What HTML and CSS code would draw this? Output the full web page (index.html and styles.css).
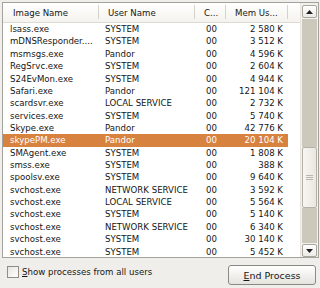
FILE: index.html
```html
<!DOCTYPE html>
<html>
<head>
<meta charset="utf-8">
<link rel="stylesheet" href="styles.css">
</head>
<body>
<div class="win">
  <div class="listbox">
    <div class="table">
      <div class="hdr">
        <div class="h">Image Name</div>
        <div class="h">User Name</div>
        <div class="h">C...</div>
        <div class="h">Mem Us...</div>
        <div class="h last"></div>
      </div>
      <div class="rows">
        <div class="row"><span class="c1">lsass.exe</span><span class="c2">SYSTEM</span><span class="c3">00</span><span class="c4">2 580 K</span></div>
        <div class="row"><span class="c1">mDNSResponder....</span><span class="c2">SYSTEM</span><span class="c3">00</span><span class="c4">3 512 K</span></div>
        <div class="row"><span class="c1">msmsgs.exe</span><span class="c2">Pandor</span><span class="c3">00</span><span class="c4">4 596 K</span></div>
        <div class="row"><span class="c1">RegSrvc.exe</span><span class="c2">SYSTEM</span><span class="c3">00</span><span class="c4">2 604 K</span></div>
        <div class="row"><span class="c1">S24EvMon.exe</span><span class="c2">SYSTEM</span><span class="c3">00</span><span class="c4">4 944 K</span></div>
        <div class="row"><span class="c1">Safari.exe</span><span class="c2">Pandor</span><span class="c3">00</span><span class="c4">121 104 K</span></div>
        <div class="row"><span class="c1">scardsvr.exe</span><span class="c2">LOCAL SERVICE</span><span class="c3">00</span><span class="c4">2 732 K</span></div>
        <div class="row"><span class="c1">services.exe</span><span class="c2">SYSTEM</span><span class="c3">00</span><span class="c4">5 740 K</span></div>
        <div class="row"><span class="c1">Skype.exe</span><span class="c2">Pandor</span><span class="c3">00</span><span class="c4">42 776 K</span></div>
        <div class="row sel"><span class="c1">skypePM.exe</span><span class="c2">Pandor</span><span class="c3">00</span><span class="c4">20 104 K</span></div>
        <div class="row"><span class="c1">SMAgent.exe</span><span class="c2">SYSTEM</span><span class="c3">00</span><span class="c4">1 808 K</span></div>
        <div class="row"><span class="c1">smss.exe</span><span class="c2">SYSTEM</span><span class="c3">00</span><span class="c4">388 K</span></div>
        <div class="row"><span class="c1">spoolsv.exe</span><span class="c2">SYSTEM</span><span class="c3">00</span><span class="c4">9 640 K</span></div>
        <div class="row"><span class="c1">svchost.exe</span><span class="c2">NETWORK SERVICE</span><span class="c3">00</span><span class="c4">3 592 K</span></div>
        <div class="row"><span class="c1">svchost.exe</span><span class="c2">LOCAL SERVICE</span><span class="c3">00</span><span class="c4">5 564 K</span></div>
        <div class="row"><span class="c1">svchost.exe</span><span class="c2">SYSTEM</span><span class="c3">00</span><span class="c4">5 140 K</span></div>
        <div class="row"><span class="c1">svchost.exe</span><span class="c2">NETWORK SERVICE</span><span class="c3">00</span><span class="c4">6 340 K</span></div>
        <div class="row"><span class="c1">svchost.exe</span><span class="c2">SYSTEM</span><span class="c3">00</span><span class="c4">30 140 K</span></div>
        <div class="row"><span class="c1">svchost.exe</span><span class="c2">SYSTEM</span><span class="c3">00</span><span class="c4">5 452 K</span></div>
      </div>
    </div>
    <div class="sb">
      <div class="sbbtn"><svg width="7" height="4" viewBox="0 0 7 4"><path d="M0 4 L3.5 0 L7 4 Z" fill="#222"/></svg></div>
      <div class="track t1"></div>
      <div class="thumb"><div class="grip"></div></div>
      <div class="track t2"></div>
      <div class="sbbtn"><svg width="7" height="4" viewBox="0 0 7 4"><path d="M0 0 L7 0 L3.5 4 Z" fill="#222"/></svg></div>
    </div>
  </div>
  <div class="bottom">
    <label class="chk"><span class="box"></span><span><u>S</u>how processes from all users</span></label>
    <div class="btn"><u>E</u>nd Process</div>
  </div>
</div>
</body>
</html>
```

FILE: styles.css
```css
html, body {
  margin: 0;
  padding: 0;
}
body {
  width: 320px;
  height: 288px;
  overflow: hidden;
  background: #efeeea;
  font-family: "DejaVu Sans", sans-serif;
  font-size: 8.6px;
  color: #161616;
}
.win {
  padding: 2px 1px 0 2px;
}
.listbox {
  display: flex;
  height: 254px;
  border: 1px solid #a3a29d;
  background: #ffffff;
}
.table {
  width: 298px;
  overflow: hidden;
}
.hdr {
  display: grid;
  grid-template-columns: 96px 96px 31px 62px 13px;
  height: 19px;
  border-bottom: 1px solid #dcdad2;
  background: linear-gradient(#ffffff, #f4f3ee);
}
.h {
  display: flex;
  align-items: center;
  padding-left: 9px;
  padding-top: 1px;
  border-right: 1px solid #d6d3cb;
  margin: 2px 0 3px;
}
.h:first-child { padding-left: 10px; }
.h.last { border-right: none; }
.rows {
  padding-top: 0.1px;
}
.row {
  display: grid;
  grid-template-columns: 96px 96px 31px 62px;
  width: 285px;
  height: 12.37px;
  line-height: 12.37px;
  white-space: nowrap;
}
.row.sel {
  background: #d7823f;
  color: #ffffff;
}
.c1 { padding-left: 7px; }
.c2 { padding-left: 6px; }
.c3 { text-align: right; padding-right: 9px; }
.c4 { text-align: right; padding-right: 5px; }
.sb {
  width: 17px;
  display: flex;
  flex-direction: column;
  align-items: stretch;
  border-left: 1px solid #e6e4de;
  background: #f2f1ec;
}
.sbbtn {
  height: 11px;
  margin: 2px 1px 1px 1px;
  border: 1px solid #a9a69c;
  border-radius: 2px;
  background: linear-gradient(#ffffff, #ecebe6);
  display: flex;
  align-items: center;
  justify-content: center;
}
.sbbtn:last-child {
  margin: 1px 1px 0 1px;
}
.track {
  background: #cdc8bc;
  margin: 0 1px;
}
.t1 { height: 128px; }
.t2 { flex: 1; }
.thumb {
  height: 59px;
  margin: 0 1px;
  border: 1px solid #b5b1a6;
  border-radius: 2px;
  background: linear-gradient(90deg, #f7f6f2, #e9e7e0);
  display: flex;
  align-items: center;
  justify-content: center;
}
.grip {
  width: 7px;
  height: 5px;
  background: repeating-linear-gradient(#b9b5aa 0 1px, transparent 1px 2px);
}
.bottom {
  display: flex;
  justify-content: space-between;
  align-items: flex-start;
  padding: 7px 3px 0 5px;
}
.chk {
  display: flex;
  align-items: center;
  gap: 3px;
  margin-top: 1px;
}
.box {
  width: 10px;
  height: 10px;
  border: 1px solid #8e8d88;
  background: linear-gradient(135deg, #e6e5e0, #ffffff);
}
.btn {
  width: 86px;
  height: 18px;
  border: 1px solid #8a8984;
  border-radius: 3px;
  background: linear-gradient(#ffffff, #e4e3dd);
  display: flex;
  align-items: center;
  justify-content: center;
  font-size: 9.5px;
}
u { text-decoration: underline; }
```
